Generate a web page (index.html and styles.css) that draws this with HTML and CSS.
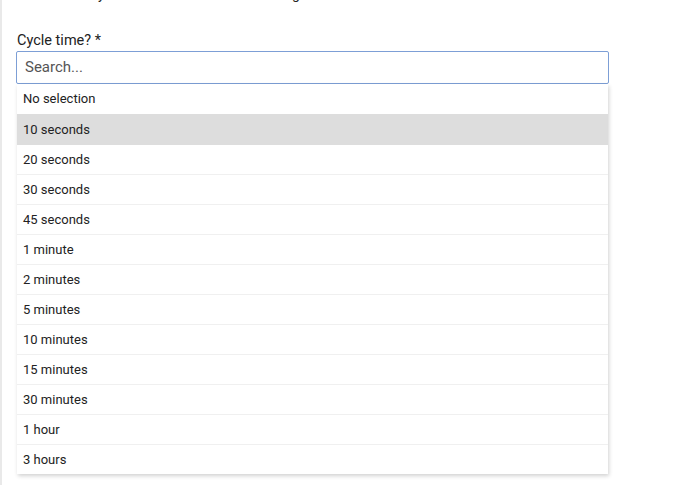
FILE: index.html
```html
<!DOCTYPE html>
<html>
<head>
<meta charset="utf-8">
<link rel="stylesheet" href="styles.css">
</head>
<body>
<div class="page">
  <p class="intro">Set how many seconds each time it is waiting</p>
  <div class="field">
    <label class="label">Cycle time? *</label>
    <div class="search">Search...</div>
    <ul class="menu">
      <li class="opt">No selection</li>
      <li class="opt active">10 seconds</li>
      <li class="opt">20 seconds</li>
      <li class="opt">30 seconds</li>
      <li class="opt">45 seconds</li>
      <li class="opt">1 minute</li>
      <li class="opt">2 minutes</li>
      <li class="opt">5 minutes</li>
      <li class="opt">10 minutes</li>
      <li class="opt">15 minutes</li>
      <li class="opt">30 minutes</li>
      <li class="opt">1 hour</li>
      <li class="opt">3 hours</li>
    </ul>
  </div>
</div>
</body>
</html>
```

FILE: styles.css
```css
html, body {
  margin: 0;
  padding: 0;
  background: #fff;
}
body {
  font-family: Roboto, "Liberation Sans", sans-serif;
  color: #222;
  overflow: hidden;
  height: 500px;
}
.page {
  border-left: 2px solid #e9e9e9;
  height: 500px;
  padding-left: 15px;
  box-sizing: border-box;
}
.intro {
  margin: -15px 0 0 0;
  font-size: 14px;
  line-height: 18px;
  height: 18px;
}
.field {
  margin-top: 29px;
  width: 592px;
}
.label {
  display: block;
  font-size: 14.5px;
  line-height: 18px;
  color: #222;
}
.search {
  margin-top: 1px;
  margin-left: -1px;
  height: 33px;
  box-sizing: border-box;
  border: 1px solid #7d9fd6;
  border-radius: 2px;
  padding: 0 8px;
  font-size: 15px;
  line-height: 31px;
  color: #555;
}
.menu {
  list-style: none;
  margin: 0;
  padding: 0;
  width: 591px;
  background: #fff;
  box-shadow: 1px 2px 4px rgba(0,0,0,0.18);
}
.opt {
  height: 30px;
  line-height: 30px;
  padding-left: 6px;
  font-size: 13px;
  color: #222;
  border-top: 1px solid #f0f0f0;
  box-sizing: border-box;
}
.opt:first-child {
  border-top: none;
}
.opt.active {
  background: #dddddd;
  border-top-color: #dddddd;
}
.opt.active + .opt {
  border-top-color: #dddddd;
}
```
